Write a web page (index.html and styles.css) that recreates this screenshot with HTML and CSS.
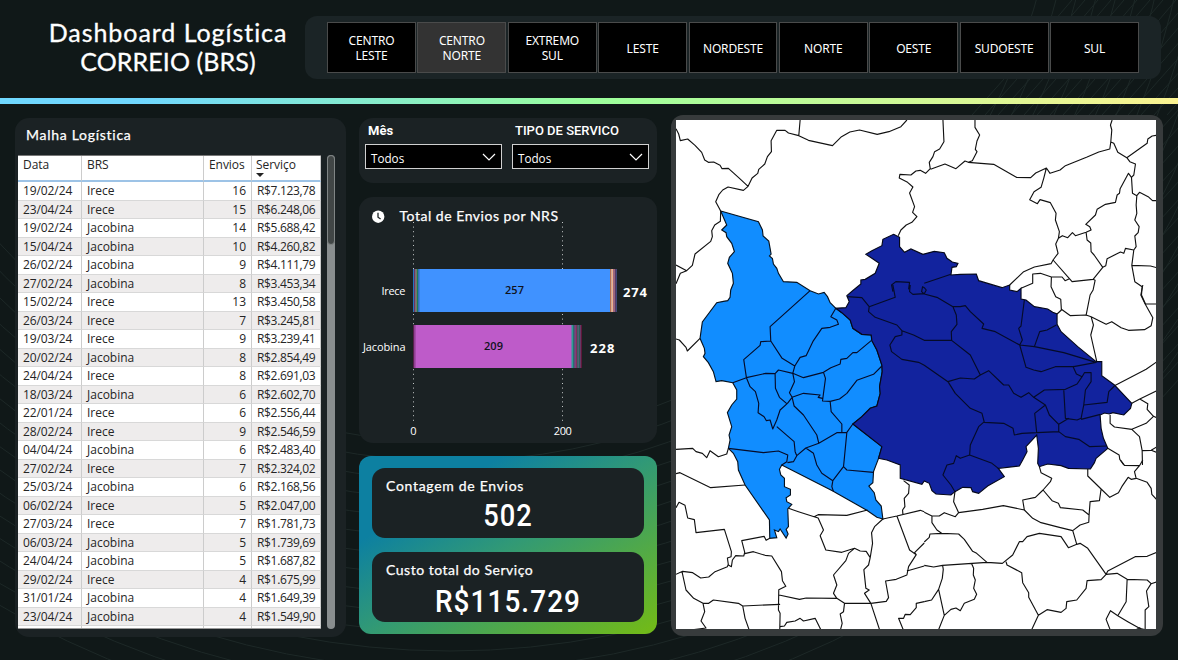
FILE: index.html
```
<!DOCTYPE html>
<html lang="pt-BR">
<head>
<meta charset="utf-8">
<title>Dashboard Logística</title>
<link rel="stylesheet" href="styles.css">
</head>
<body>
<svg class="backdrop" viewBox="0 0 1178 660" aria-hidden="true"><g id="rings"></g></svg>
<div class="page">
  <header class="header">
    <h1 class="title"><span class="title-a">Dashboard Logística</span><br><span class="title-b">CORREIO (BRS)</span></h1>
    <nav class="regions">
      <button class="region">CENTRO<br>LESTE</button>
      <button class="region selected">CENTRO<br>NORTE</button>
      <button class="region">EXTREMO<br>SUL</button>
      <button class="region">LESTE</button>
      <button class="region">NORDESTE</button>
      <button class="region">NORTE</button>
      <button class="region">OESTE</button>
      <button class="region">SUDOESTE</button>
      <button class="region">SUL</button>
    </nav>
  </header>
  <div class="rainbow"></div>
  <main class="main">
    <section class="panel mesh">
      <h2 class="heading mesh-title">Malha Logística</h2>
      <div class="mesh-body">
        <div class="table-view">
          <table class="table">
            <colgroup><col class="c1"><col class="c2"><col class="c3"><col class="c4"></colgroup>
            <thead><tr><th>Data</th><th>BRS</th><th class="num envios">Envios</th><th class="sorted">Serviço<i class="sort"></i></th></tr></thead>
            <tbody id="rows"></tbody>
          </table>
        </div>
        <div class="scroll"><div class="thumb"></div></div>
      </div>
    </section>

    <div class="middle">
      <section class="panel filters">
        <div class="filter"><span class="filter-name">Mês</span>
          <div class="select"><span>Todos</span><svg width="14" height="8" viewBox="0 0 14 8"><path d="M1 1l6 6 6-6" fill="none" stroke="#fff" stroke-width="1.2"/></svg></div></div>
        <div class="filter"><span class="filter-name tipo">TIPO DE SERVICO</span>
          <div class="select"><span>Todos</span><svg width="14" height="8" viewBox="0 0 14 8"><path d="M1 1l6 6 6-6" fill="none" stroke="#fff" stroke-width="1.2"/></svg></div></div>
      </section>

      <section class="panel chart">
        <svg class="chart-svg" viewBox="359 197 298 246">
          <circle cx="378.2" cy="216.7" r="6.2" fill="#fff"/>
          <path d="M378 212.8v4.4l2.6 1.8" fill="none" stroke="#1b2224" stroke-width="1.3"/>
          <text class="chart-title" x="399.5" y="221" textLength="158.5">Total de Envios por NRS</text>
          <g stroke="#c5c9c9" stroke-width="1" stroke-dasharray="1 3.6"><path d="M413.5 222v200M562.5 222v200"/></g>
          <g>
            <rect x="413" y="269" width="203.5" height="43" fill="#4092ff"/>
            <rect x="413" y="269" width="1" height="43" fill="#2277c0"/>
            <rect x="414" y="269" width="1.5" height="43" fill="#6c3362"/>
            <rect x="415.5" y="269" width="1.3" height="43" fill="#9a7842"/>
            <rect x="416.8" y="269" width="1.2" height="43" fill="#187b5d"/>
            <rect x="418" y="269" width="1.5" height="43" fill="#376eb7"/>
            <rect x="610" y="269" width="1.2" height="43" fill="#b36d50"/>
            <rect x="611.2" y="269" width="1.8" height="43" fill="#edb18b"/>
            <rect x="613" y="269" width="2" height="43" fill="#9b667d"/>
            <rect x="615" y="269" width="1.5" height="43" fill="#593a65"/>
            <rect x="413" y="325" width="169" height="43" fill="#be5bc9"/>
            <rect x="413" y="325" width="1.5" height="43" fill="#57204c"/>
            <rect x="414.5" y="325" width="1.2" height="43" fill="#96459b"/>
            <rect x="571.5" y="325" width="1.5" height="43" fill="#329c93"/>
            <rect x="573" y="325" width="1.3" height="43" fill="#276c77"/>
            <rect x="574.3" y="325" width="1.2" height="43" fill="#4d4660"/>
            <rect x="575.5" y="325" width="1.5" height="43" fill="#7e2e5d"/>
            <rect x="577" y="325" width="1.5" height="43" fill="#3e5f61"/>
            <rect x="578.5" y="325" width="2" height="43" fill="#285f5a"/>
            <rect x="580.5" y="325" width="1.5" height="43" fill="#5d1739"/>
          </g>
          <g class="axis">
            <text x="381.5" y="295" textLength="24">Irece</text>
            <text x="363" y="351" textLength="42.5">Jacobina</text>
            <text x="410.3" y="435">0</text>
            <text x="553.8" y="435" textLength="18">200</text>
          </g>
          <g class="inside"><text x="505" y="294" textLength="19">257</text><text x="484" y="350" textLength="19">209</text></g>
          <g class="totals"><text x="623" y="297" textLength="24">274</text><text x="590" y="353" textLength="24.5">228</text></g>
        </svg>
      </section>

      <section class="kpis">
        <div class="kpi"><h2 class="heading k1">Contagem de Envios</h2><p class="value v1">502</p></div>
        <div class="kpi"><h2 class="heading k2">Custo total do Serviço</h2><p class="value v2">R$115.729</p></div>
      </section>
    </div>

    <section class="map-frame">
      <svg class="map" viewBox="18 30 1440 1527" preserveAspectRatio="none">
        <path class="light" d="M152 303L265 335 277 360 279 378 296 393 300 415 303 432 298 438 307 446 310 462 320 475 325 490 340 515 380 517 420 542 445 552 462 547 472 560 480 578 497 595 515 608 540 630 548 655 575 673 603 675 605 692 620 720 635 765 636 785 628 830 630 850 620 888 600 895 575 920 548 942 635 1010 625 1045 610 1085 608 1118 596 1128 612 1148 617 1170 633 1188 638 1227 620 1222 592 1202 505 1153 488 1143 335 1065 328 1078 332 1095 343 1105 343 1130 361 1138 361 1155 348 1163 350 1175 365 1183 353 1197 355 1250 348 1258 354 1272 348 1284 330 1257 325 1265 313 1260 320 1283 299 1285 298 1230 225 1125 205 1080 203 1055 190 1030 175 1015 180 990 177 975 185 950 172 908 185 885 200 867 200 840 188 818 155 812 138 815 130 785 115 758 100 740 105 730 103 715 90 685 97 636 140 578 160 574 173 572 180 562 182 540 190 520 187 490 173 460 178 442 193 425 185 400 170 380 168 368 155 360 170 345Z"/>
        <path class="dark" d="M670 373L688 382 688 410 703 427 722 417 758 433 792 424 822 428 830 445 846 456 863 460 858 470 845 472 842 495 870 493 918 492 925 512 995 533 1018 525 1018 540 1040 545 1052 535 1052 567 1067 570 1092 590 1132 597 1147 607 1160 612 1160 643 1172 665 1222 710 1277 755 1294 755 1294 797 1332 825 1384 880 1380 895 1360 915 1327 908 1317 912 1302 909 1289 915 1292 955 1299 985 1312 1015 1277 1045 1272 1058 1260 1077 1194 1075 1172 1067 1132 1062 1107 1070 1102 1060 1104 1015 1099 975 1067 1010 1070 1025 1057 1050 1047 1068 984 1075 1002 1100 952 1128 925 1150 907 1145 902 1133 877 1132 854 1145 842 1155 797 1152 785 1142 777 1120 762 1113 755 1123 690 1105 690 1065 650 1050 625 1045 635 1010 548 942 575 920 600 895 620 888 630 850 628 830 636 785 635 765 620 720 605 692 603 675 575 673 548 655 540 630 515 608 497 595 527 593 537 575 530 557 550 540 572 522 572 510 585 508 615 490 627 460 605 445 587 433 605 422 635 407 638 388Z"/>
        <g class="lines">
          <path d="M18 56L26 72 31 92 53 87 75 106 95 127 104 150 115 157 131 156 150 166 156 176 175 175 205 202 234 229M390 30L386 77M152 303L137 275 147 253 158 240 174 231 220 241 234 229 246 204 263 190 266 178 284 162 292 140 304 125 303 92 320 61 345 61 355 69 386 77 415 91 487 107 514 80 539 66 568 60 621 73 656 65 692 50 710 30M152 303L151 334 134 345 125 362 127 380 122 394 75 432 67 466 50 482 31 490 18 521M18 465L50 482M684 377L692 360 708 345 725 337 740 320 727 307 733 290 718 249 728 231 712 217 687 204 689 193 722 195 737 183 750 181 766 190 780 176 777 157 788 140 793 125 808 117 821 95 818 30M781 178L824 162 857 176 884 153 894 157 970 163 1038 202 1081 203 1096 189 1128 174 1139 190 1169 180 1185 167 1250 141 1285 126 1318 117 1321 96 1324 60 1320 45 1325 30M894 157L906 152 920 125 915 118 920 93 928 75 914 52 914 30M1128 174L1120 205 1112 232 1091 245 1078 269 1101 281 1109 269 1140 278 1157 310 1155 330 1167 365 1164 385 1156 402 1163 430 1148 450 1142 461 1092 471 1060 485 1018 525M1164 385L1176 377 1192 383 1206 368 1215 377 1247 367 1250 390 1261 399 1262 425 1271 435 1297 472 1306 467 1310 446 1350 426 1360 430 1365 415 1390 420M1247 367L1262 360 1258 350 1246 343 1275 315 1280 298 1305 283 1335 277 1340 255 1347 250 1349 236 1374 190 1383 202 1386 250 1399 257 1397 285 1399 310 1393 330 1406 350 1403 368 1393 378 1397 410 1390 420 1384 466 1393 515 1415 530 1413 555 1425 582M1321 96L1330 100 1342 127 1369 143 1378 155 1395 162 1390 195 1383 202M1369 143L1430 100 1432 87 1445 78 1458 76M1399 257L1407 247 1433 260 1446 272 1458 272M1384 466L1440 468 1458 473M1148 450L1197 506 1205 515 1268 508 1297 472M1268 508L1274 511 1268 540 1259 555 1247 616M1197 506L1184 512 1175 501 1143 501 1110 490 1087 492 1087 520 1052 535M1143 501L1142 530 1156 560 1171 568 1173 600 1160 612"/>
          <g transform="translate(762 525)"><path d="M410 72L438 92 485 90 500 95 545 118 562 110 590 128 612 136 660 134 680 122 685 98 662 57 649 30 655 0M662 57H696M500 95L507 120 499 150 517 230M570 302L665 253 696 231M622 355L646 342 696 318M646 342L670 356 668 373 687 394 696 398M687 394L665 415 622 433 570 426 557 415 557 390M622 433L645 455 653 497 654 540M653 497L680 496 696 486M680 496L696 502M550 490L584 510 586 523 598 540"/></g>
          <path d="M18 687L28 690 48 712 52 723 90 685M18 1018L68 1015 78 1025 97 1030 110 1043 120 1022 145 1040 170 1032 175 1015"/>
          <path class="in" d="M420 542L300 650 302 693 272 695 270 706 221 749 229 803 188 818M302 693L336 745 374 768 368 790 325 780 315 791 287 790 229 803 240 830 256 845 266 880 264 908 282 920 289 932 300 930 308 957 320 930 330 900 352 880 366 862 358 848 373 815 368 790M315 791L316 835 328 862 350 881M497 595L482 620 500 630 505 643 480 652 455 655 428 695 408 737 390 742 374 768M368 790L400 803 460 787 482 773 510 762 512 748 530 745 548 728 560 728 603 692M460 787L466 805 460 850 457 873 480 874 508 867 530 850 560 811 610 793 635 768M480 874L483 905 515 942 515 967M366 862L400 850 450 855 444 862 457 865M366 862L372 888 400 915 440 975 446 1000M320 950L372 995 375 1025 380 1037 407 1014 446 1000 500 968 530 967 548 942M175 1015L280 1028 325 1023 353 1035 350 1055 335 1065M380 1037L370 1055 352 1058M407 1014L430 1030 440 1065 455 1090 488 1112 520 1070 523 1040 530 967M520 1070L530 1080 610 1087M488 1112L485 1130 490 1145"/>
          <path class="in" d="M530 560L575 563 597 590 675 562 668 525M597 590L595 605 615 622 680 645 695 662 695 675 675 680 659 705 664 725 695 748 745 757 762 766M695 662L730 675 762 691 844 691M668 545L664 525 677 515 718 517 715 538M720 525L718 545 728 553 762 551 768 540 762 533 757 530 754 545 762 552M762 552L800 562 848 590 858 615 860 643 843 665 844 691 900 735 930 795 912 807 870 804 833 815 762 766M762 520L842 493M848 590L870 590 885 587 900 605 940 642 935 655 975 665 1048 705 1092 710 1180 728 1277 757 1210 770 1155 770 1112 785 1090 780 1067 772 1048 705 1056 690 1045 655 1052 648 1062 570M1092 710L1108 665 1130 660 1158 645M930 795L955 782 1000 825 1015 825 1030 850 1052 862 1075 848 1090 862 1122 840 1185 838 1220 822 1235 800 1242 788 1262 788 1262 815 1245 840 1240 885 1310 877 1315 845 1332 828M1207 768L1218 792 1235 800M1240 885L1232 925 1220 930 1185 925 1180 838M1232 928L1290 913M1090 862L1125 885 1137 915 1165 943 1195 925M1125 885L1093 910 1099 968 1165 965 1165 943M1165 965L1185 980 1225 988 1258 1010 1310 1008M833 815L855 850 900 895 935 910 942 937 1000 940 1028 955 1032 975 1055 970 1099 968M942 935L925 950 900 1005 898 1035 965 1060 984 1075M898 1035L870 1045 858 1037 850 1060 830 1065 818 1095 842 1125 854 1145"/>
          <g transform="translate(0 1050)"><path d="M18 41L30 38 122 83 225 75M18 143L27 127 45 136 53 174 73 179 78 218 163 208 184 275 183 290 172 294 175 315 184 320 187 300 197 287 221 288 224 277 215 242 282 229 288 241 299 235M18 343L38 334 68 338 92 354 116 351 135 335 172 320 175 312M224 281L250 275 285 286 305 288 334 335 337 362 347 379 326 389 325 450 330 460 329 509M36 335L48 390 71 415 99 430 104 455 93 483 108 504 70 509M99 430L116 430 130 420 205 430 218 438 330 433M218 438L225 475 237 509M327 405L388 418 408 414 500 415 523 430 602 430 648 424 655 413 646 363 678 358 710 345 715 320 738 284 718 270 680 168M355 145L385 155 432 170 444 164 530 166 592 150M432 170L444 174 460 210 450 227 467 270 515 277 553 265 570 273 588 274 600 293 595 315 581 329 587 385 597 390 583 400 602 430 628 509M500 415L490 400 500 375 490 345 527 302 535 280 553 265M638 177L613 200 604 218 607 250 600 293M638 177L680 168 750 151 762 155M700 62L717 75 715 100 702 115 704 140 697 150 698 163M523 430L520 455 510 462 516 490 511 509M330 500L343 498 350 487 375 483 390 475 400 483 435 475 452 509M738 284L733 278 762 249M710 333L762 318M762 425L738 430 738 443 720 464 705 463 700 475 685 475 699 509"/></g>
          <g transform="translate(762 1050)"><path d="M0 157L23 168 45 168 60 158 93 170 103 158 175 148 237 137 300 150 295 120 333 112 356 90 378 65 382 55 350 38 345 20M92 95L88 125 103 158M23 168L23 188 38 210 52 220 103 222 120 238 145 274 157 280 188 307 234 310 265 285 285 245 295 245 308 230 345 220 410 230 432 263 457 253 445 212 405 202 350 188 325 175 300 150M0 246L15 232 17 222 52 220M188 307L55 316 28 321 0 316M55 316L57 328 54 355 43 388 22 420 0 425M43 388L60 466 43 509M60 466L80 448 95 444 108 452 120 430 150 418 157 403 148 385 153 360 147 345 148 325 142 311M245 305L248 315 292 338 295 368 313 398 313 412 342 466 322 509M342 466L368 449 410 457 425 445 427 425 457 420 485 385 488 362 530 359 545 343 578 340 608 358 668 360 680 371 696 366M457 253L467 250 490 265 545 343 550 333 632 290 668 289 696 277M356 90L383 122 402 130 408 143 475 150 494 165 497 125 525 122 530 87 490 48 490 27M494 165L493 187 467 195 445 212M530 87L556 112 582 98 592 80 611 52 620 58 635 55 668 67 680 85 682 103 696 118M588 0L600 16 645 17 655 0M645 17L630 35 635 55M608 358L605 425 580 467 558 452 545 478 557 509M580 467L610 485 645 505 662 509 662 450 673 440 666 393 680 371M635 509L645 503 652 508"/></g>
        </g>
      </svg>
    </section>
  </main>
</div>
<script src="app.js"></script>
</body>
</html>
```
FILE: styles.css
```
* { box-sizing: border-box; }
html, body { height: 100%; }
body {
  margin: 0;
  overflow: hidden;
  background: #101818;
  color: #fff;
  font-family: "Open Sans", "Noto Sans", sans-serif;
}
h1, h2, p { margin: 0; font-weight: 400; }
.backdrop { position: absolute; inset: 0; width: 1178px; height: 660px; z-index: -1; }
.backdrop path, .backdrop circle { fill: none; stroke: #1d2827; stroke-width: 1; }
.page { width: 1178px; height: 660px; }
.header { display: flex; height: 98px; padding: 16px 17px 0 31px; }
.title {
  width: 274px;
  padding-top: 2px;
  text-align: center;
  font: 400 25px/29px Lato, sans-serif;
  -webkit-text-stroke: .3px #fff;
}
.title-a { letter-spacing: .95px; }
.title-b { letter-spacing: .1px; }
.regions {
  display: flex;
  gap: 1.4px;
  width: 856px;
  height: 63px;
  padding: 6px 22px;
  border-radius: 12px;
  background: #1b2426;
}
.region {
  flex: 1;
  padding: 1px 0 0;
  border: 1.5px solid #4a4b4b;
  background: #000;
  color: #fff;
  font: 12px/15px "Noto Sans", sans-serif;
  letter-spacing: -.15px;
}
.region.selected { background: #333; }
.rainbow { height: 6px; background: linear-gradient(90deg, #70d8ff 0 12%, #9bff9c 50%, #fbf391); }
.main { display: flex; padding-top: 14px; }
.panel { border-radius: 14px; background: #1b2224; }
.heading { font: 400 14px/18px Lato, sans-serif; -webkit-text-stroke: .25px #fff; }

.mesh { width: 331px; height: 519px; margin-left: 15px; }
.mesh-title { padding: 8px 0 0 11px; letter-spacing: .72px; }
.mesh-body { display: flex; gap: 6px; margin: 11px 0 0 3px; }
.table-view { width: 303px; height: 474px; overflow: hidden; background: #fff; border-top: 1px solid #777; border-bottom: 1px solid #999; }
.table { width: 303px; table-layout: fixed; border-collapse: separate; border-spacing: 0; color: #252525; font-size: 12px; }
.c1 { width: 64px; }
.c2 { width: 122px; }
.c3 { width: 48px; }
.c4 { width: 69px; }
.table th, .table td { border-right: 1px solid #ccc; padding: 0 5px; text-align: left; white-space: nowrap; }
.table th { height: 26px; vertical-align: top; font-weight: 400; line-height: 18px; border-bottom: 2px solid #9dc3e6; letter-spacing: -.05px; }
.table th.sorted { padding-left: 4px; }
.table th.envios { padding-right: 8px; }
.table td { height: 18.5px; line-height: 17px; border-bottom: 1px solid #d8d8d8; }
.table tr:nth-child(even) td { background: #eeecec; }
.table .num { text-align: right; }
.table td:first-child { letter-spacing: -.1px; }
.table .cost { letter-spacing: -.33px; }
.sort { display: block; width: 0; margin-top: -1px; border: 4px solid transparent; border-top-color: #222; border-bottom: 0; }
.scroll { width: 8px; height: 474px; border-radius: 4px; background: #898e8f; }
.thumb { height: 90px; border: 1px solid #808585; border-radius: 4px; background: #414646; }

.middle { width: 298px; margin-left: 13px; }
.filters { display: flex; gap: 10px; height: 65px; padding: 4px 6px; }
.filter { width: 137px; }
.filter-name { display: block; height: 22px; padding-left: 3px; font: 700 13px/17px Roboto, sans-serif; }
.filter-name.tipo { font-size: 13px; font-weight: 500; }
.select {
  display: flex;
  align-items: center;
  justify-content: space-between;
  height: 25px;
  padding: 0 5px;
  border: 1px solid #d0d0d0;
  background: #000;
  font-size: 11.7px;
}
.select span { padding-top: 2px; }
.chart { height: 246px; margin-top: 14px; }
.chart-svg { display: block; width: 298px; height: 246px; }
.chart-svg text { fill: #fff; }
.chart-title { font: 14px Lato, sans-serif; stroke: #fff; stroke-width: .25px; }
.axis { font: 11px "Open Sans", sans-serif; }
.chart-svg .inside text { fill: #10131c; font: 600 11px "Open Sans", sans-serif; }
.totals { font: 700 13px "Open Sans", sans-serif; }

.kpis {
  display: flex;
  flex-direction: column;
  gap: 14px;
  height: 178px;
  margin-top: 13px;
  padding: 12px 13px;
  border-radius: 12px;
  background: linear-gradient(to bottom right, #0d80a1 24%, #319976 50%, #70b91b 97%);
}
.kpi { height: 70px; padding: 9px 14px 0; border-radius: 13px; background: #1b2224; }
.k1 { letter-spacing: .7px; }
.k2 { letter-spacing: .52px; }
.value { text-align: center; font: 500 31px/42px Roboto, sans-serif; }
.v1 { letter-spacing: 1.2px; line-height: 41px; transform: scaleX(.88); }
.v2 { margin: 0 -2px; letter-spacing: 1.2px; line-height: 46px; transform: scaleX(.9); }

.map-frame { width: 492px; height: 521px; margin-left: 14px; margin-top: -3px; padding: 5px 4.5px; border-radius: 12px; background: #373b3c; }
.map { display: block; width: 480.5px; height: 509px; background: #fff; }
.light { fill: #118dff; stroke: #06121f; stroke-width: 3.4; }
.dark { fill: #12239e; stroke: #05081a; stroke-width: 3.4; }
.lines { fill: none; stroke: #111; stroke-width: 3.4; stroke-linejoin: round; }
.lines .in { stroke: #050b28; }
```
FILE: app.js
```
const rows = [
  ["19/02/24", "Irece", 16, "7.123,78"], ["23/04/24", "Irece", 15, "6.248,06"],
  ["19/02/24", "Jacobina", 14, "5.688,42"], ["15/04/24", "Jacobina", 10, "4.260,82"],
  ["26/02/24", "Jacobina", 9, "4.111,79"], ["27/02/24", "Jacobina", 8, "3.453,34"],
  ["15/02/24", "Irece", 13, "3.450,58"], ["26/03/24", "Irece", 7, "3.245,81"],
  ["19/03/24", "Irece", 9, "3.239,41"], ["20/02/24", "Jacobina", 8, "2.854,49"],
  ["24/04/24", "Irece", 8, "2.691,03"], ["18/03/24", "Jacobina", 6, "2.602,70"],
  ["22/01/24", "Irece", 6, "2.556,44"], ["28/02/24", "Irece", 9, "2.546,59"],
  ["04/04/24", "Jacobina", 6, "2.483,40"], ["27/02/24", "Irece", 7, "2.324,02"],
  ["25/03/24", "Jacobina", 6, "2.168,56"], ["06/02/24", "Irece", 5, "2.047,00"],
  ["27/03/24", "Irece", 7, "1.781,73"], ["06/03/24", "Jacobina", 5, "1.739,69"],
  ["24/04/24", "Jacobina", 5, "1.687,82"], ["29/02/24", "Irece", 4, "1.675,99"],
  ["31/01/24", "Jacobina", 4, "1.649,39"], ["23/04/24", "Jacobina", 4, "1.549,90"]
];
document.getElementById("rows").innerHTML = rows.map(r =>
  `<tr><td>${r[0]}</td><td>${r[1]}</td><td class="num">${r[2]}</td><td class="num cost">R$${r[3]}</td></tr>`
).join("") + "<tr><td></td><td></td><td></td><td></td></tr>";

// Decorative contour lines behind the panels
let art = "";
for (let r = 610; r < 900; r += 19) art += `<circle cx="450" cy="-168" r="${r}"/>`;
for (let i = 0; i < 18; i++) {
  const x = 1072 + i * 13;
  art += `<path d="M${x} 0Q${x - 50} 60 ${x - 100} 115"/>`;
}
for (let i = 0; i < 16; i++) art += `<path d="M1160 ${130 + i * 18}l20 -22"/>`;
document.getElementById("rings").innerHTML = art;
```
